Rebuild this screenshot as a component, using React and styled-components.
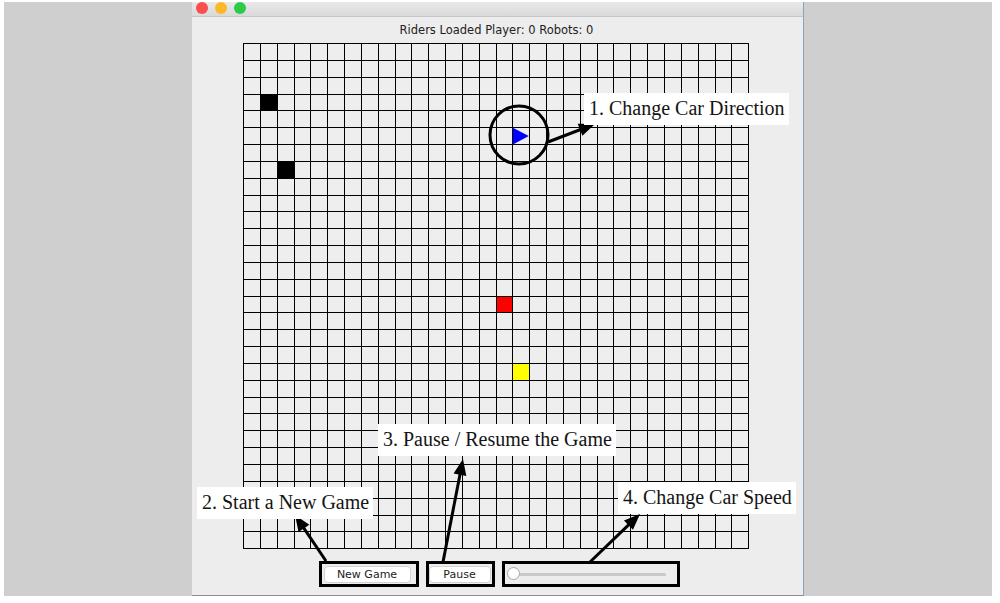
import React from "react";
import styled, { createGlobalStyle } from "styled-components";

const Global = createGlobalStyle`
  html, body { margin: 0; padding: 0; background: #ffffff; }
  body { width: 1000px; height: 603px; overflow: hidden; }
`;

const CELL = 16.84;
const N = 30;

const Page = styled.div`
  position: relative;
  width: 1000px;
  height: 603px;
  box-sizing: border-box;
  padding: 2px 0 0 4px;
  background: #ffffff;
`;

const Panel = styled.div`
  display: flex;
  width: 988px;
  height: 594px;
  background: #cfcfcf;
`;

const Window = styled.div`
  display: flex;
  flex-direction: column;
  margin-left: 188px;
  width: 612px;
  height: 594px;
  box-sizing: border-box;
  background: #ededed;
  border-right: 1px solid #7fa6c2;
  border-bottom: 1px solid #8c8c8c;
`;

const TitleBar = styled.div`
  display: flex;
  align-items: flex-start;
  gap: 7px;
  height: 15px;
  padding-left: 4px;
  box-sizing: border-box;
  background: linear-gradient(#e9e9e9, #d9d9d9);
  border-bottom: 1px solid #c6c6c6;
`;

const Light = styled.span`
  width: 12px;
  height: 12px;
  border-radius: 50%;
  background: ${(p) => p.$c};
`;

const Content = styled.div`
  display: flex;
  flex-direction: column;
  align-items: center;
  padding-right: 2px;
`;

const Status = styled.div`
  height: 26px;
  line-height: 26px;
  font-family: "DejaVu Sans", sans-serif;
  font-size: 11.5px;
  color: #222222;
`;

const Controls = styled.div`
  display: flex;
  gap: 7px;
  margin-top: 11px;
  margin-left: 5px;
`;

const Highlight = styled.div`
  display: flex;
  align-items: flex-start;
  box-sizing: border-box;
  width: ${(p) => p.$w}px;
  height: 26px;
  padding: 2px 0 0 ${(p) => p.$pl}px;
  border: 3px solid #000000;
`;

const Button = styled.div`
  width: ${(p) => p.$w}px;
  height: 17px;
  box-sizing: border-box;
  display: flex;
  align-items: center;
  justify-content: center;
  background: #ffffff;
  border: 1px solid #d2d2d2;
  border-radius: 4px;
  font-family: "DejaVu Sans", sans-serif;
  font-size: 11px;
  color: #1c1c1c;
`;

const SliderBox = styled.div`
  position: relative;
  width: 156px;
  height: 3px;
  margin: 7px 0 0 2px;
  border-radius: 2px;
  background: #c9c9c9;
`;

const Thumb = styled.div`
  position: absolute;
  left: -3px;
  top: -6px;
  width: 13px;
  height: 13px;
  box-sizing: border-box;
  border-radius: 50%;
  background: #ffffff;
  border: 1px solid #a8a8a8;
`;

const Overlay = styled.svg`
  position: absolute;
  left: 0;
  top: 0;
  pointer-events: none;
`;

const Callout = styled.div`
  position: absolute;
  left: ${(p) => p.$x}px;
  top: ${(p) => p.$y}px;
  padding: 4px 4px 5px 5px;
  background: #ffffff;
  font-family: "Liberation Serif", "Times New Roman", serif;
  font-size: 20px;
  line-height: 23px;
  color: #141414;
  white-space: pre;
`;

function Board() {
  const size = CELL * N + 1;
  const lines = [];
  for (let i = 0; i <= N; i++) {
    const p = 0.5 + i * CELL;
    lines.push(<line key={"v" + i} x1={p} y1={0} x2={p} y2={size} />);
    lines.push(<line key={"h" + i} x1={0} y1={p} x2={size} y2={p} />);
  }
  const cell = (c, r, fill) => (
    <rect
      key={`${c}-${r}`}
      x={0.5 + c * CELL}
      y={0.5 + r * CELL}
      width={CELL}
      height={CELL}
      fill={fill}
    />
  );
  const tx = 0.5 + 16 * CELL;
  const ty = 0.5 + 5 * CELL;
  return (
    <svg width={Math.ceil(size)} height={Math.ceil(size)} style={{ display: "block" }}>
      <rect x="0" y="0" width={size} height={size} fill="#eeeeee" />
      {cell(1, 3, "#000000")}
      {cell(2, 7, "#000000")}
      {cell(15, 15, "#ff0000")}
      {cell(16, 19, "#ffff00")}
      <polygon
        points={`${tx},${ty} ${tx + CELL - 1},${ty + CELL / 2} ${tx},${ty + CELL}`}
        fill="#0000ff"
      />
      <g stroke="#000000" strokeWidth="1" shapeRendering="crispEdges">
        {lines}
      </g>
    </svg>
  );
}

function Arrow({ x1, y1, x2, y2 }) {
  const len = 16;
  const hw = 6.5;
  const dx = x2 - x1;
  const dy = y2 - y1;
  const L = Math.hypot(dx, dy);
  const ux = dx / L;
  const uy = dy / L;
  const bx = x2 - ux * len;
  const by = y2 - uy * len;
  const pts = `${x2},${y2} ${bx - uy * hw},${by + ux * hw} ${bx + uy * hw},${by - ux * hw}`;
  return (
    <g>
      <line x1={x1} y1={y1} x2={bx + ux * 2} y2={by + uy * 2} stroke="#000" strokeWidth="3" />
      <polygon points={pts} fill="#000" />
    </g>
  );
}

export default function App() {
  return (
    <Page>
      <Global />
      <Panel>
        <Window>
          <TitleBar>
            <Light $c="#fc4d4f" />
            <Light $c="#fdb827" />
            <Light $c="#2ccb47" />
          </TitleBar>
          <Content>
            <Status>Riders Loaded Player: 0 Robots: 0</Status>
            <Board />
            <Controls>
              <Highlight $w={100} $pl={2}>
                <Button $w={87}>New Game</Button>
              </Highlight>
              <Highlight $w={69} $pl={0}>
                <Button $w={62}>Pause</Button>
              </Highlight>
              <Highlight $w={178} $pl={3}>
                <SliderBox>
                  <Thumb />
                </SliderBox>
              </Highlight>
            </Controls>
          </Content>
        </Window>
      </Panel>

      <Overlay width="1000" height="603">
        <circle cx="519" cy="135" r="29" fill="none" stroke="#000" strokeWidth="3" />
        <Arrow x1={548} y1={142} x2={595} y2={124} />
        <Arrow x1={326} y1={561} x2={295} y2={515} />
        <Arrow x1={443} y1={562} x2={463} y2={459} />
        <Arrow x1={590} y1={562} x2={640} y2={514} />
      </Overlay>

      <Callout $x={584} $y={93}>1. Change Car Direction</Callout>
      <Callout $x={197} $y={487}>2. Start a New Game</Callout>
      <Callout $x={378} $y={424}>3. Pause / Resume the Game</Callout>
      <Callout $x={618} $y={482}>4. Change Car Speed</Callout>
    </Page>
  );
}
